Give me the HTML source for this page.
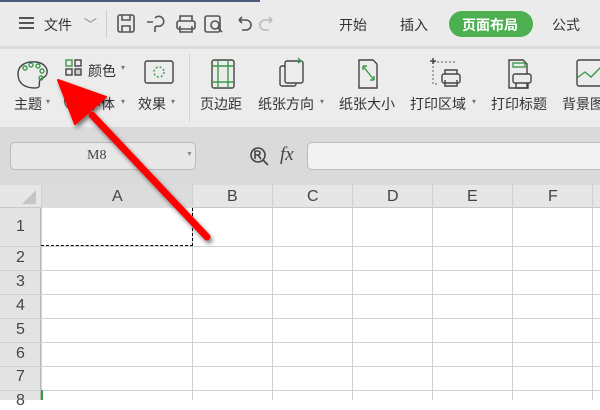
<!DOCTYPE html><html><head><meta charset="utf-8"><style>
*{margin:0;padding:0;box-sizing:border-box}
body{width:600px;height:400px;overflow:hidden;position:relative;background:#fff;font-family:"Liberation Sans","Noto Sans CJK SC",sans-serif;color:#333}
.a{position:absolute;white-space:nowrap}
.t{font-size:14px}
</style></head><body>
<div class="a" style="left:0;top:0;width:600px;height:46px;background:#ebebeb"></div>
<div class="a" style="left:0;top:0;width:260px;height:2px;background:#4a5a7a"></div>
<div class="a" style="left:0;top:46px;width:600px;height:3px;background:#dcdcdc"></div>
<div class="a" style="left:0;top:49px;width:600px;height:78px;background:#ececec"></div>
<div class="a" style="left:0;top:127px;width:600px;height:58px;background:#dadada"></div>
<!-- top bar -->
<div class="a" style="left:19px;top:17px;width:15px;height:2px;background:#555;box-shadow:0 5px 0 #555,0 10px 0 #555"></div>
<div class="a t" style="left:44px;top:15px">文件</div>
<div class="a" style="left:84px;top:14px;font-size:13px;color:#888">﹀</div>
<div class="a" style="left:106px;top:10px;width:1px;height:28px;background:#ccc"></div>
<svg class="a" style="left:115px;top:12px" width="260" height="24" fill="none" stroke="#555" stroke-width="1.6">
<rect x="3" y="3" width="16" height="17" rx="2"/><path d="M7 3v5h8V3M7 20v-6h8v6"/>
<path d="M40 6a5 5 0 1 1 2 8l-2 1v5M32 10h6"/>
<rect x="62" y="9" width="18" height="8" rx="2"/><path d="M65 9V4h12v5M65 14v6h12v-6"/>
<rect x="90" y="4" width="15" height="16" rx="2"/><circle cx="100" cy="13" r="4"/><path d="M103 16l4 4"/>
<path d="M124 8h7a5 5 0 0 1 0 10h-4M124 8l3-3M124 8l3 3"/>
<path stroke="#bbb" d="M157 8h-7a5 5 0 0 0 0 10h4M157 8l-3-3M157 8l-3 3"/>
</svg>
<div class="a t" style="left:339px;top:15px">开始</div>
<div class="a t" style="left:400px;top:15px">插入</div>
<div class="a" style="left:449px;top:11px;width:84px;height:26px;border-radius:13px;background:#4caf50"></div>
<div class="a t" style="left:462px;top:15px;color:#fff;font-weight:bold">页面布局</div>
<div class="a t" style="left:552px;top:15px">公式</div>
<!-- ribbon -->
<svg class="a" style="left:15px;top:56px" width="590" height="36" fill="none" stroke="#444" stroke-width="1.4">
<path d="M3 18c0-10 10-13 18-12s12 6 11 11-5 4-7 7 2 8-5 8C8 32 3 26 3 18z"/>
<g stroke="#3a9a4a"><circle cx="10" cy="12" r="2"/><circle cx="16" cy="9" r="2"/><circle cx="23" cy="10" r="2"/><circle cx="27" cy="15" r="2"/><circle cx="26" cy="22" r="2"/></g>
<g stroke="#3a9a4a"><rect x="51" y="4" width="6" height="6"/></g><rect x="60" y="4" width="6" height="6"/><rect x="51" y="13" width="6" height="6"/><rect x="60" y="13" width="6" height="6" fill="#ccc"/>
<rect x="130" y="5" width="28" height="22" rx="2"/><circle cx="144" cy="16" r="5" stroke="#3a9a4a" stroke-dasharray="2 2"/>
<rect x="197" y="4" width="22" height="28" rx="2"/><path stroke="#3a9a4a" d="M197 10h22M197 26h22M203 4v28M213 4v28"/>
<rect x="265" y="10" width="16" height="20" rx="2"/><rect x="270" y="5" width="18" height="22" rx="2" fill="#ececec"/><path stroke="#3a9a4a" d="M283 2l3 3-3 2"/>
<path d="M344 4h14l4 4v24h-18z"/><path stroke="#3a9a4a" d="M348 10l11 14M348 10v4M348 10h4M359 24h-4M359 24v-4"/>
<path stroke="#888" stroke-dasharray="2 2" d="M418 6h22M418 6v22h6"/><path d="M418 2v6M415 5h6"/><rect x="427" y="18" width="18" height="9" rx="2"/><path d="M430 18v-4h12v4M430 24v6h12v-6"/>
<path d="M494 4h14l4 4v24h-18z"/><rect x="498" y="7" width="12" height="4" stroke="#3a9a4a"/><rect x="498" y="18" width="18" height="9" rx="2" fill="#ececec"/><path d="M501 27v5h12v-5"/>
<rect x="562" y="4" width="30" height="26" rx="2"/><path stroke="#3a9a4a" d="M562 22l8-6 6 5 10-10"/>
</svg>
<div class="a t" style="left:88px;top:61px">颜色</div><div class="a" style="left:121px;top:63px;font-size:8px;color:#777">▾</div>
<div class="a t" style="left:14px;top:94px">主题</div><div class="a" style="left:46px;top:97px;font-size:8px;color:#777">▾</div>
<div class="a" style="left:64px;top:92px;width:18px;height:18px;border:1.5px solid #555;border-radius:50%"></div>
<div class="a t" style="left:87px;top:94px">字体</div><div class="a" style="left:121px;top:97px;font-size:8px;color:#777">▾</div>
<div class="a t" style="left:138px;top:94px">效果</div><div class="a" style="left:171px;top:97px;font-size:8px;color:#777">▾</div>
<div class="a" style="left:189px;top:54px;width:1px;height:68px;background:#d4d4d4"></div>
<div class="a t" style="left:200px;top:94px">页边距</div>
<div class="a t" style="left:258px;top:94px">纸张方向</div><div class="a" style="left:320px;top:97px;font-size:8px;color:#777">▾</div>
<div class="a t" style="left:339px;top:94px">纸张大小</div>
<div class="a t" style="left:410px;top:94px">打印区域</div><div class="a" style="left:472px;top:97px;font-size:8px;color:#777">▾</div>
<div class="a t" style="left:491px;top:94px">打印标题</div>
<div class="a t" style="left:562px;top:94px">背景图</div>
<!-- formula bar -->
<div class="a" style="left:10px;top:142px;width:186px;height:28px;border:1px solid #bbb;border-radius:5px;background:#e8e8e8"></div>
<div class="a" style="left:87px;top:148px;font-family:'Liberation Serif',serif;font-size:14px;color:#444">M8</div>
<div class="a" style="left:186px;top:151px;font-size:7px;color:#888">▼</div>
<svg class="a" style="left:248px;top:145px" width="24" height="24" fill="none" stroke="#444" stroke-width="1.6"><circle cx="10" cy="10" r="7"/><path d="M15 15l5 5M7 14V6h3a2 2 0 0 1 0 4H7M10 10l3 4"/></svg>
<div class="a" style="left:280px;top:144px;font-family:'Liberation Serif',serif;font-style:italic;font-size:19px;color:#444">fx</div>
<div class="a" style="left:307px;top:142px;width:300px;height:28px;border:1px solid #bbb;border-radius:5px;background:#f2f2f2"></div>
<!-- grid -->
<div class="a" style="left:0;top:185px;width:600px;height:23px;background:#e6e6e6;border-bottom:1px solid #c8c8c8"></div>
<div class="a" style="left:0;top:208px;width:41px;height:192px;background:#e3e3e3;border-right:1px solid #b8b8b8"></div>
<svg class="a" style="left:20px;top:188px" width="20" height="18"><path d="M16 2v14H2z" fill="#c6c6c6"/></svg>
<div class="a" style="left:41px;top:185px;width:152px;height:23px;background:#dcdcdc"></div>
<svg class="a" style="left:0;top:185px" width="600" height="215" stroke="#d0d0d0" stroke-width="1">
<path d="M41.5 0V215M192.5 0V215M272.5 0V215M352.5 0V215M432.5 0V215M512.5 0V215M592.5 0V215"/>
<path d="M0 61.5H600M0 85.5H600M0 109.5H600M0 133.5H600M0 157.5H600M0 181.5H600M0 205.5H600"/>
</svg>
<div class="a" style="left:41px;top:208px;width:152px;height:38px;border-right:1px dashed #000;border-bottom:1px dashed #000"></div>
<div class="a" style="left:41px;top:390px;width:2px;height:10px;background:#3a9a4a"></div>
<div class="a" style="font-size:16px;color:#444;left:112px;top:188px">A</div>
<div class="a" style="font-size:16px;color:#444;left:227px;top:188px">B</div>
<div class="a" style="font-size:16px;color:#444;left:307px;top:188px">C</div>
<div class="a" style="font-size:16px;color:#444;left:387px;top:188px">D</div>
<div class="a" style="font-size:16px;color:#444;left:467px;top:188px">E</div>
<div class="a" style="font-size:16px;color:#444;left:548px;top:188px">F</div>
<div class="a" style="font-size:16px;color:#444;left:16px;top:218px">1</div>
<div class="a" style="font-size:16px;color:#444;left:16px;top:249px">2</div>
<div class="a" style="font-size:16px;color:#444;left:16px;top:273px">3</div>
<div class="a" style="font-size:16px;color:#444;left:16px;top:297px">4</div>
<div class="a" style="font-size:16px;color:#444;left:16px;top:321px">5</div>
<div class="a" style="font-size:16px;color:#444;left:16px;top:345px">6</div>
<div class="a" style="font-size:16px;color:#444;left:16px;top:368px">7</div>
<div class="a" style="font-size:16px;color:#444;left:16px;top:392px">8</div>
<!-- arrow -->
<svg class="a" style="left:0;top:0" width="600" height="400">
<defs><filter id="s"><feDropShadow dx="2" dy="3" stdDeviation="2" flood-opacity="0.5"/></filter></defs>
<g filter="url(#s)" fill="#f00" stroke="#f00">
<path d="M92 115L207 237" stroke-width="7" stroke-linecap="round"/>
<path d="M58 80L106 97L75 124Z" stroke-width="2" stroke-linejoin="round"/>
</g></svg>
</body></html>
